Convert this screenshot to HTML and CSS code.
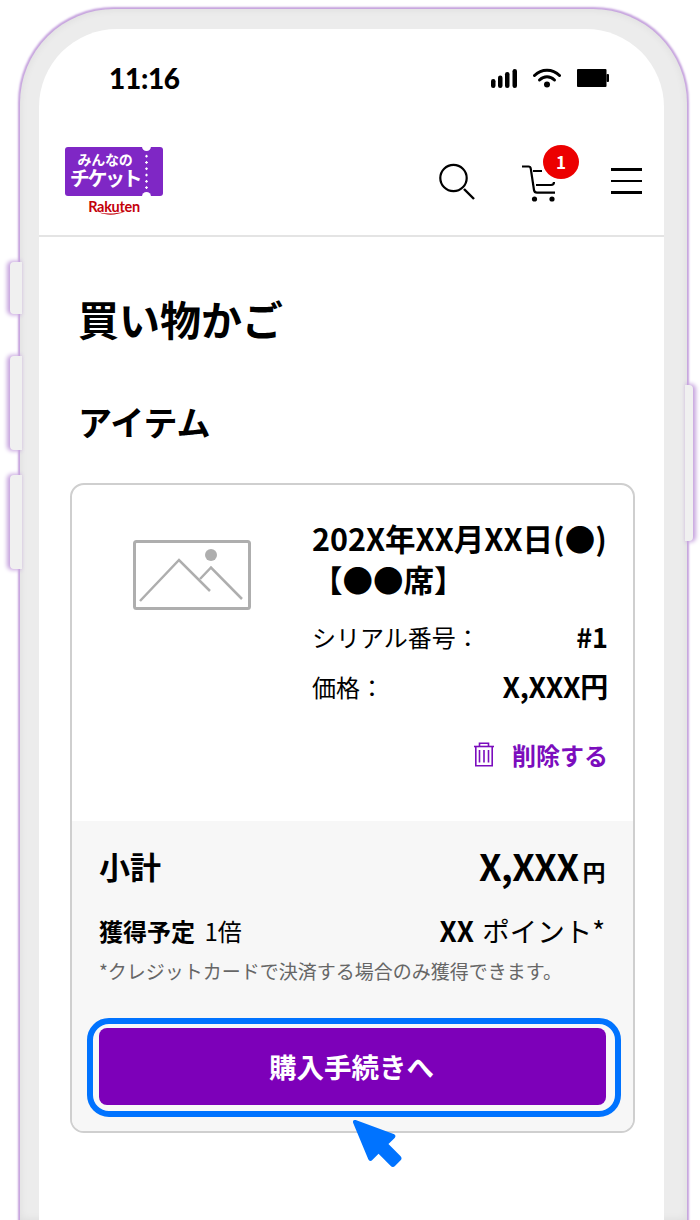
FILE: index.html
```html
<!DOCTYPE html>
<html lang="ja">
<head>
  <meta charset="UTF-8">
  <meta name="viewport" content="width=device-width, initial-scale=1.0">
  <title>買い物かご</title>
  <link rel="stylesheet" href="styles.css">
</head>
<body>
  <div class="phone">
    <span class="side-btn btn-a"></span>
    <span class="side-btn btn-b"></span>
    <span class="side-btn btn-c"></span>
    <span class="side-btn btn-right"></span>

    <div class="screen">
      <div class="status-bar">
        <span class="time">11:16</span>
        <div class="status-icons">
          <svg width="26" height="19" viewBox="0 0 26 19"><g fill="#000"><rect x="0" y="10" width="4.500" height="9" rx="2.200"/><rect x="7" y="6.500" width="4.500" height="12.500" rx="2.200"/><rect x="14" y="3" width="4.500" height="16" rx="2.200"/><rect x="21.500" y="0" width="4.500" height="19" rx="2.200"/></g></svg>
          <svg width="28" height="20" viewBox="0 0 28 20"><g fill="none" stroke="#000" stroke-width="3" stroke-linecap="round"><path d="M1.500 7.500C8.500 .5 19.500 .5 26.500 7.500"/><path d="M6.500 12C11 7.700 17 7.700 21.500 12"/></g><circle cx="14" cy="16.500" r="3" fill="#000"/></svg>
          <svg width="32" height="18" viewBox="0 0 32 18"><rect x="0" y="0" width="29.500" height="18" rx="1" fill="#000"/><rect x="29.500" y="5" width="2.500" height="8" rx="1" fill="#000"/></svg>
        </div>
      </div>

      <header class="site-header">
        <div class="logo">
          <div class="ticket">
            <div class="ticket-text">
              <span class="ticket-small">みんなの</span>
              <span class="ticket-big">チケット</span>
            </div>
            <span class="ticket-dots"></span>
          </div>
          <div class="rakuten">Rakuten
            <svg class="swoosh" width="26" height="4" viewBox="0 0 26 4"><path d="M0 1.500C8 3 16 3 26 .5C17 4.500 8 4.500 0 1.500Z" fill="#c4000a"/></svg>
          </div>
        </div>
        <div class="header-icons">
          <svg class="icon-search" width="38" height="38" viewBox="0 0 38 38"><circle cx="15.500" cy="15" r="13.200" fill="none" stroke="#000" stroke-width="2.200"/><path d="M26 26L36 36" stroke="#000" stroke-width="2.400"/></svg>
          <div class="cart">
            <svg width="34" height="38" viewBox="0 0 34 38"><g fill="none" stroke="#000" stroke-width="2.200"><path d="M0 1.500H6.500C8 1.500 8.600 2.400 8.800 3.800L12 25C12.300 27 13.300 27.600 15 27.600H33"/><path d="M11 6H20"/><path d="M14 20H29C31 20 32 19 32 17"/></g><circle cx="12.500" cy="34" r="2.600" fill="#000"/><circle cx="30" cy="34" r="2.600" fill="#000"/></svg>
            <span class="badge">1</span>
          </div>
          <div class="burger"><span></span><span></span><span></span></div>
        </div>
      </header>

      <main class="content">
        <h1>買い物かご</h1>
        <h2>アイテム</h2>

        <section class="card">
          <div class="item">
            <svg class="thumb" width="118" height="70" viewBox="0 0 118 70">
              <rect x="1.500" y="1.500" width="115" height="67" rx="2" fill="none" stroke="#aeaeae" stroke-width="3"/>
              <g fill="none" stroke="#aeaeae" stroke-width="2.500"><path d="M7 61L46 20L77 51"/><path d="M67 39L78 27.500L109 59"/></g>
              <circle cx="78" cy="15" r="6" fill="#aeaeae"/>
            </svg>
            <div class="item-info">
              <div class="item-title">202X年XX月XX日(●)<br>【●●席】</div>
              <div class="info-row"><span class="info-label">シリアル番号：</span><span class="serial">#1</span></div>
              <div class="info-row"><span class="info-label">価格：</span><span class="price">X,XXX円</span></div>
              <div class="delete">
                <svg width="22" height="25" viewBox="0 0 22 25"><g fill="none" stroke="#7b0dbd" stroke-width="1.600"><path d="M1 4.500H21"/><path d="M6.500 4.500V1.200H15.500V4.500"/><path d="M2.800 4.500V23.700H19.200V4.500"/><path d="M6.500 8V20.500M11 8V20.500M15.500 8V20.500"/></g></svg>
                <span>削除する</span>
              </div>
            </div>
          </div>

          <div class="summary">
            <div class="sum-row">
              <span class="sum-label">小計</span>
              <span class="sum-price">X,XXX<small>円</small></span>
            </div>
            <div class="point-row">
              <span class="point-label"><b>獲得予定</b> 1倍</span>
              <span class="point-value"><b>XX</b> ポイント*</span>
            </div>
            <p class="note">*クレジットカードで決済する場合のみ獲得できます。</p>
            <div class="btn-ring"><button type="button" class="buy-btn">購入手続きへ</button></div>
          </div>
          <svg class="pointer" width="52" height="52" viewBox="0 0 50 50"><path d="M2 3.500C1.500 1.500 2.500 .5 4.500 1L41 14.500C43 15.300 43.300 17 42 18.200L36 24L47.500 35.500C49 37 49 38.500 47.500 40L42.500 45C41 46.500 39.500 46.500 38 45L26.500 33.500L20.500 39.500C19 41 17.300 40.500 16.500 38.500Z" fill="#0073ff"/></svg>
        </section>
      </main>
    </div>
  </div>
</body>
</html>
```
FILE: styles.css
```css
* {
  box-sizing: border-box;
}

html, body {
  margin: 0;
  padding: 0;
  background: #fff;
}

body {
  width: 700px;
  height: 1220px;
  overflow: hidden;
  padding: 9px 0 0 20px;
  font-family: "Noto Sans CJK JP", "Noto Sans", sans-serif;
  color: #000;
}

.phone {
  position: relative;
  width: 667px;
  height: 1211px;
  padding: 20px 23px 0 19px;
  background: #ececec;
  border-radius: 94px 94px 0 0;
  box-shadow: 0 0 2px 1.500px #c6a3de, inset 0 0 8px rgba(0, 0, 0, .07);
}

.side-btn {
  position: absolute;
  width: 12px;
  background: #f0f0f0;
  border-radius: 4px 0 0 4px;
  box-shadow: -2px 0 4px 1px #c6a3de;
}

.btn-a { left: -10px; top: 253px; height: 52px; }
.btn-b { left: -10px; top: 347px; height: 94px; }
.btn-c { left: -10px; top: 466px; height: 94px; }

.btn-right {
  right: -6px;
  top: 376px;
  width: 8px;
  height: 156px;
  border-radius: 0 4px 4px 0;
  box-shadow: 2px 0 4px 1px #c6a3de;
}

.screen {
  width: 625px;
  height: 1191px;
  overflow: hidden;
  background: #fff;
  border-radius: 78px 78px 0 0;
}

.status-bar {
  display: flex;
  justify-content: space-between;
  align-items: center;
  height: 100px;
  padding: 0 55px 0 70px;
}

.time {
  font-family: Lato, sans-serif;
  font-weight: 900;
  font-size: 28px;
  letter-spacing: -.3px;
  margin-top: -2px;
}

.status-icons {
  display: flex;
  align-items: center;
  gap: 16px;
  margin-top: -2px;
}

.site-header {
  display: flex;
  justify-content: space-between;
  align-items: flex-start;
  height: 108px;
  padding: 18px 22px 0 26px;
  border-bottom: 2px solid #e4e4e4;
}

.ticket {
  position: relative;
  display: flex;
  width: 98px;
  height: 49px;
  background: #7f27c5;
  border-radius: 3px;
  color: #fff;
}

/* notches above and below the perforation */
.ticket::before,
.ticket::after {
  content: "";
  position: absolute;
  left: 77px;
  width: 9px;
  height: 9px;
  border-radius: 50%;
  background: #fff;
}

.ticket::before { top: -5px; }
.ticket::after { bottom: -5px; }

.ticket-text {
  display: flex;
  flex-direction: column;
  align-items: center;
  width: 80px;
  padding-top: 4px;
  font-weight: 700;
}

.ticket-small {
  font-size: 14px;
  line-height: 17px;
  letter-spacing: -.3px;
}

.ticket-big {
  font-size: 20px;
  line-height: 20px;
  letter-spacing: -2.400px;
}

.ticket-dots {
  width: 3px;
  margin: 6px 0 5px;
  background: radial-gradient(circle, #fff 1px, transparent 1.400px) 0 0 / 3px 6.300px repeat-y;
}

.rakuten {
  position: relative;
  margin-top: 3px;
  font-family: Lato, sans-serif;
  font-size: 14.500px;
  font-weight: 700;
  line-height: 15px;
  letter-spacing: -.3px;
  text-align: center;
  color: #c4000a;
}

.swoosh {
  position: absolute;
  left: 34px;
  top: 12px;
}

.header-icons {
  display: flex;
  align-items: flex-start;
}

.icon-search {
  margin-top: 15.500px;
  margin-right: 46px;
}

.cart {
  position: relative;
  margin-top: 18px;
  margin-right: 55px;
  height: 38px;
}

.badge {
  position: absolute;
  left: 21px;
  top: -20px;
  width: 36px;
  height: 34px;
  border-radius: 50%;
  background: #ec0000;
  color: #fff;
  font-size: 17px;
  font-weight: 700;
  line-height: 34px;
  text-align: center;
}

.burger {
  display: flex;
  flex-direction: column;
  gap: 9px;
  width: 31px;
  margin-top: 21px;
}

.burger span {
  height: 2.500px;
  background: #000;
}

.content {
  padding: 0 29px 0 31px;
}

h1 {
  margin: 52px 0 0 8px;
  font-size: 41px;
  font-weight: 700;
  line-height: 58px;
}

h2 {
  margin: 51px 0 38px 8px;
  font-size: 34px;
  font-weight: 700;
  line-height: 47px;
}

.card {
  position: relative;
  height: 650px;
  border: 2px solid #cfcfcf;
  border-radius: 14px;
}

.item {
  display: flex;
  height: 336px;
  padding: 33px 25px 0 61px;
}

.thumb {
  margin-top: 22px;
  margin-right: 61px;
  flex: none;
}

.item-info {
  flex: 1;
}

.item-title {
  font-size: 30.500px;
  font-weight: 700;
  line-height: 41px;
  margin-bottom: 11px;
  white-space: nowrap;
}

.info-row {
  display: flex;
  justify-content: space-between;
  align-items: center;
  height: 50px;
}

.info-label {
  font-size: 24px;
}

.serial {
  font-size: 27px;
  font-weight: 700;
}

.price {
  font-size: 28px;
  font-weight: 700;
  letter-spacing: -.3px;
}

.delete {
  display: flex;
  justify-content: flex-end;
  align-items: center;
  gap: 17px;
  margin-top: 26px;
  color: #7b0dbd;
  font-size: 24px;
  font-weight: 700;
}

.summary {
  height: 310px;
  padding: 18px 16px 0 15px;
  background: #f7f7f7;
  border-radius: 0 0 12px 12px;
}

.sum-row,
.point-row {
  display: flex;
  justify-content: space-between;
  align-items: center;
  padding: 0 12px 0 12px;
}

.sum-row {
  height: 52px;
}

.sum-label {
  font-size: 31px;
  font-weight: 700;
}

.sum-price {
  font-size: 36px;
  font-weight: 700;
  letter-spacing: -.5px;
}

.sum-price small {
  font-size: 23px;
  font-weight: 700;
  margin-left: 4px;
}

.point-row {
  margin-top: 16px;
  height: 46px;
}

.point-label {
  font-size: 24px;
}

.point-label b {
  margin-right: 4px;
}

.point-value {
  font-size: 27.500px;
}

.point-value b {
  margin-right: 2px;
}

.note {
  margin: 3px 0 0;
  padding-left: 12px;
  font-size: 19px;
  line-height: 30px;
  color: #666;
  white-space: nowrap;
}

.btn-ring {
  margin-top: 32px;
  width: 534px;
  height: 99px;
  padding: 4px 9px 6px 6px;
  border: 6px solid #0073ff;
  border-radius: 22px;
  background: #f8f8f8;
}

.buy-btn {
  display: block;
  width: 100%;
  height: 77px;
  padding: 0 2px 2px 0;
  border: none;
  border-radius: 8px;
  background: #7d00b9;
  color: #fff;
  font-family: inherit;
  font-size: 27.500px;
  font-weight: 700;
}

.pointer {
  position: absolute;
  left: 279px;
  top: 634px;
}
```
